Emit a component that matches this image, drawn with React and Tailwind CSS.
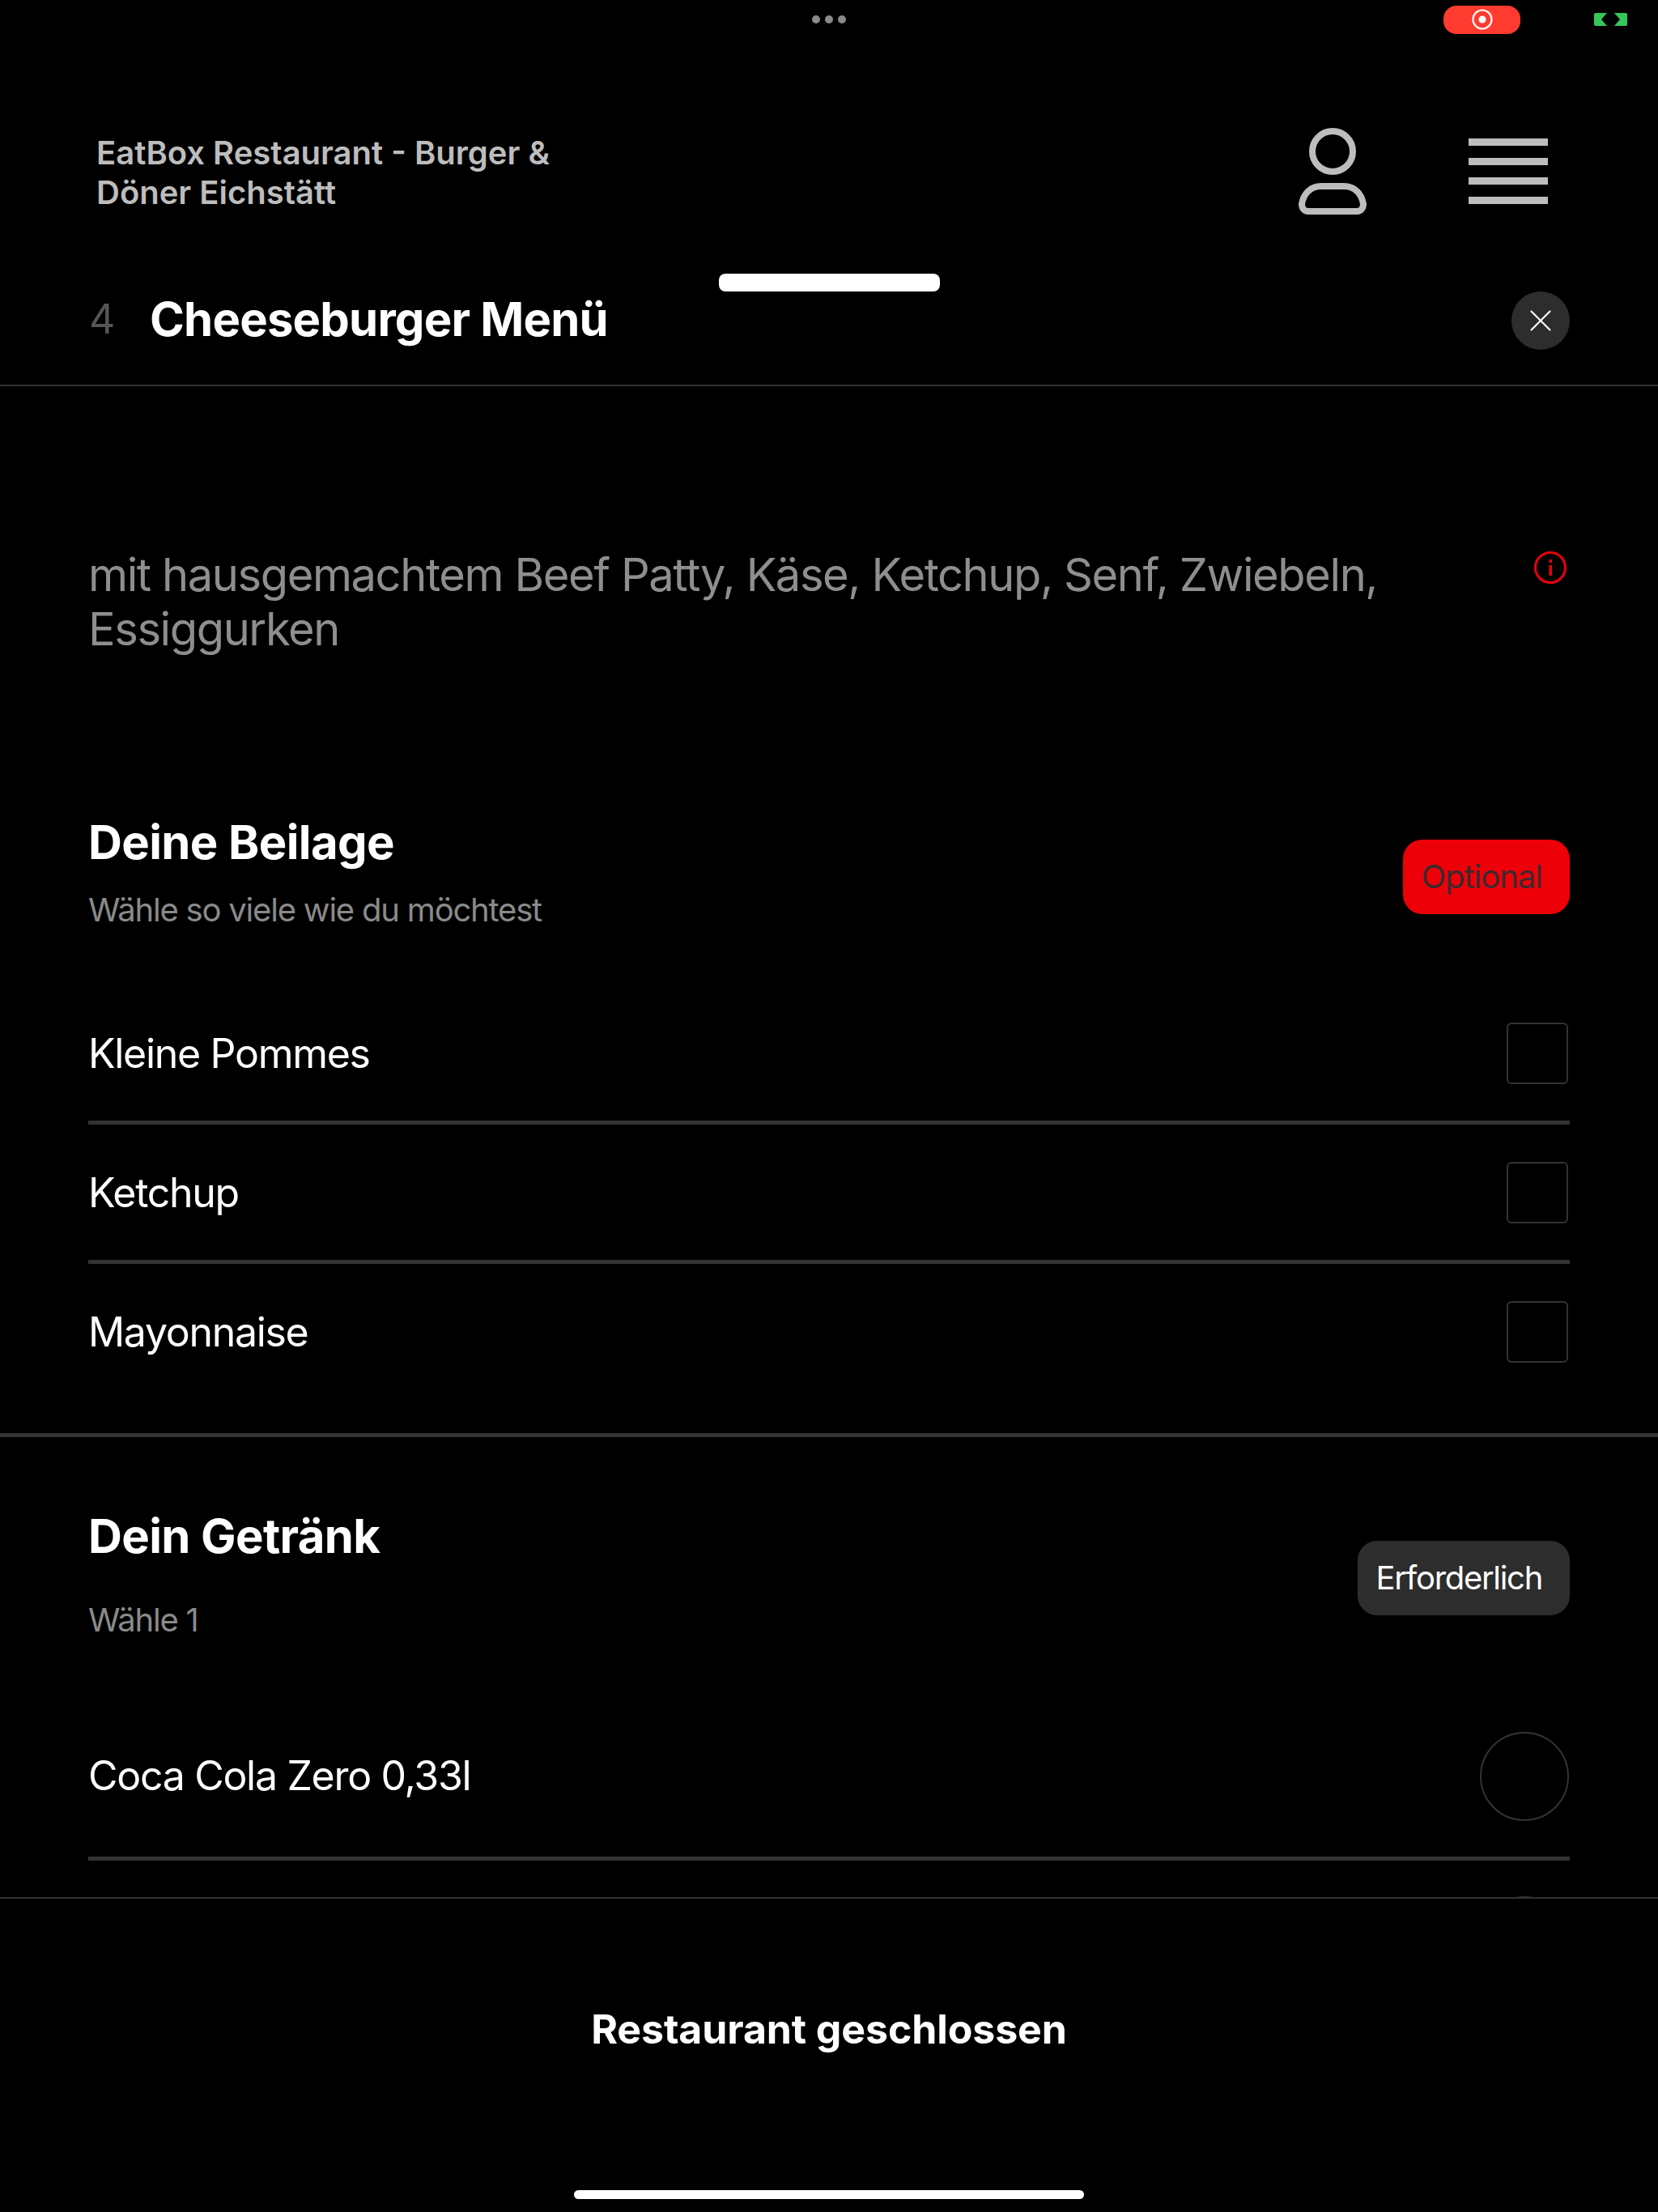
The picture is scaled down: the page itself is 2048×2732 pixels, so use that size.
import { X } from 'lucide-react';

const FONT = "font-['Inter',sans-serif]";

function StatusBar() {
  return (
    <div className="grid grid-cols-3 h-[48px] items-center">
      <div />
      <div className="flex justify-center gap-[6px]">
        <span className="w-[10px] h-[10px] rounded-full bg-[#8a8a8a]" />
        <span className="w-[10px] h-[10px] rounded-full bg-[#8a8a8a]" />
        <span className="w-[10px] h-[10px] rounded-full bg-[#8a8a8a]" />
      </div>
      <div className="flex justify-end items-center gap-[91px] pr-[38px]">
        <div className="w-[95px] h-[35px] rounded-[16px] bg-[#ff3b30] flex items-center justify-center">
          <svg width="26" height="26" viewBox="0 0 26 26">
            <circle cx="13" cy="13" r="11.5" fill="none" stroke="#fff" strokeWidth="2.2" />
            <circle cx="13" cy="13" r="4.5" fill="#fff" />
          </svg>
        </div>
        <svg width="41" height="16" viewBox="0 0 41 16">
          <path d="M0 2 A2 2 0 0 1 2 0 H16 L9 8 L16 16 H2 A2 2 0 0 1 0 14 Z" fill="#34c759" />
          <path d="M41 2 A2 2 0 0 0 39 0 H25 L32 8 L25 16 H39 A2 2 0 0 0 41 14 Z" fill="#34c759" />
        </svg>
      </div>
    </div>
  );
}

function Header() {
  return (
    <div className="h-[290px] flex justify-between items-start pl-[119px] pr-[136px] pt-[110px]">
      <p className="mt-[6px] w-[600px] text-[40px] leading-[49px] font-semibold text-[#bdbdbd]">
        EatBox Restaurant - Burger &amp; Döner Eichstätt
      </p>
      <div className="flex items-start gap-[126px]">
        <svg width="84" height="107" viewBox="0 0 84 107" fill="none" stroke="#bdbdbd" strokeWidth="8">
          <ellipse cx="42" cy="29" rx="25" ry="25" />
          <path d="M28 72 H56 C70 72 78 82 80 94 C80 99 77 103 72 103 H12 C7 103 4 99 4 94 C6 82 14 72 28 72 Z" />
        </svg>
        <div className="flex flex-col gap-[15px] mt-[13px]">
          <div className="w-[98px] h-[9px] bg-[#bdbdbd]" />
          <div className="w-[98px] h-[9px] bg-[#bdbdbd]" />
          <div className="w-[98px] h-[9px] bg-[#bdbdbd]" />
          <div className="w-[98px] h-[9px] bg-[#bdbdbd]" />
        </div>
      </div>
    </div>
  );
}

function SectionHead({ title, hint, badge, badgeClass, hintClass }) {
  return (
    <div className="flex items-center justify-between">
      <div>
        <h3 className="text-[58px] leading-[68px] font-bold tracking-[-0.6px] text-white">{title}</h3>
        <p className={`text-[40px] leading-[48px] tracking-[-1.2px] text-[#8a8a8a] ${hintClass}`}>{hint}</p>
      </div>
      <span className={`h-[92px] rounded-[24px] pl-[22px] pr-[34px] flex items-center text-[40px] ${badgeClass}`}>
        {badge}
      </span>
    </div>
  );
}

function OptionRow({ label, rowClass, radio }) {
  return (
    <div className={`flex items-center justify-between ${rowClass}`}>
      <span className="text-[50px] leading-[60px] tracking-[-1.3px] text-white">{label}</span>
      {radio ? (
        <span className="w-[110px] h-[110px] rounded-full border-2 border-[#333] mr-px mt-[2px]" />
      ) : (
        <span className="w-[76px] h-[76px] rounded-[6px] border-2 border-[#333] mr-[2px]" />
      )}
    </div>
  );
}

export default function App() {
  return (
    <div className={`w-[2048px] h-[2732px] bg-black flex flex-col overflow-hidden ${FONT}`}>
      <StatusBar />
      <Header />

      {/* Sheet */}
      <div className="flex-1 min-h-0 flex flex-col">
        <div className="w-[273px] h-[22px] mx-auto rounded-[8px] bg-white" />

        <div className="h-[117px] border-b-2 border-[#333] flex justify-between items-start pl-[110px] pr-[109px]">
          <div className="flex items-center h-[69px]">
            <span className="w-[75px] text-[50px] text-[#555]">4</span>
            <h2 className="text-[58px] font-bold tracking-[-0.8px] text-white">Cheeseburger Menü</h2>
          </div>
          <button className="w-[72px] h-[72px] rounded-full bg-[#2d2d2d] flex items-center justify-center">
            <X size={46} strokeWidth={1.1} className="text-white" />
          </button>
        </div>

        {/* Scrollable part */}
        <div className="flex-1 min-h-0 overflow-hidden">
          <div className="flex justify-between items-start pt-[200px] pl-[109px] pr-[113px]">
            <p className="w-[1650px] text-[56px] leading-[67px] tracking-[-1.4px] text-[#8e8e8e]">
              mit hausgemachtem Beef Patty, Käse, Ketchup, Senf, Zwiebeln, Essiggurken
            </p>
            <svg className="mt-[4px]" width="40" height="40" viewBox="0 0 40 40" fill="none">
              <circle cx="20" cy="20" r="18.5" stroke="#e8000b" strokeWidth="3" />
              <rect x="18.5" y="17" width="3.5" height="13" fill="#e8000b" />
              <rect x="18.5" y="10" width="3.5" height="4" fill="#e8000b" />
            </svg>
          </div>

          <div className="px-[109px] pt-[195px] pb-[41px] border-b-[5px] border-[#333]">
            <div className="h-[154px] flex flex-col justify-center">
              <SectionHead
                title="Deine Beilage"
                hint="Wähle so viele wie du möchtest"
                hintClass="mt-[26px] mb-[12px]"
                badge="Optional"
                badgeClass="tracking-[-1px] bg-[#ee0008] text-[#3c2a2e]"
              />
            </div>
            <div className="mt-[57px]">
              <OptionRow label="Kleine Pommes" rowClass="h-[172px] border-b-[5px] border-[#333]" />
              <OptionRow label="Ketchup" rowClass="h-[172px] border-b-[5px] border-[#333]" />
              <OptionRow label="Mayonnaise" rowClass="h-[168px]" />
            </div>
          </div>

          <div className="px-[109px] pt-[88px]">
            <SectionHead
              title="Dein Getränk"
              hint="Wähle 1"
              hintClass="mt-[46px] mb-[10px]"
              badge="Erforderlich"
              badgeClass="tracking-[-1.3px] bg-[#2d2d2d] text-white"
            />
            <div className="mt-[58px]">
              <OptionRow label="Coca Cola Zero 0,33l" rowClass="h-[205px] border-b-[5px] border-[#333]" radio />
              {/* next option is scrolled out, only the radio's top edge peeks in */}
              <OptionRow label="" rowClass="h-[196px]" radio />
            </div>
          </div>
        </div>

        {/* Footer */}
        <div className="h-[389px] shrink-0 border-t-2 border-[#333] flex flex-col items-center pt-[131px]">
          <span className="text-[50px] leading-[60px] font-bold tracking-[-0.1px] text-white">Restaurant geschlossen</span>
          <div className="w-[630px] h-[11px] rounded-full bg-white mt-[169px]" />
        </div>
      </div>
    </div>
  );
}
